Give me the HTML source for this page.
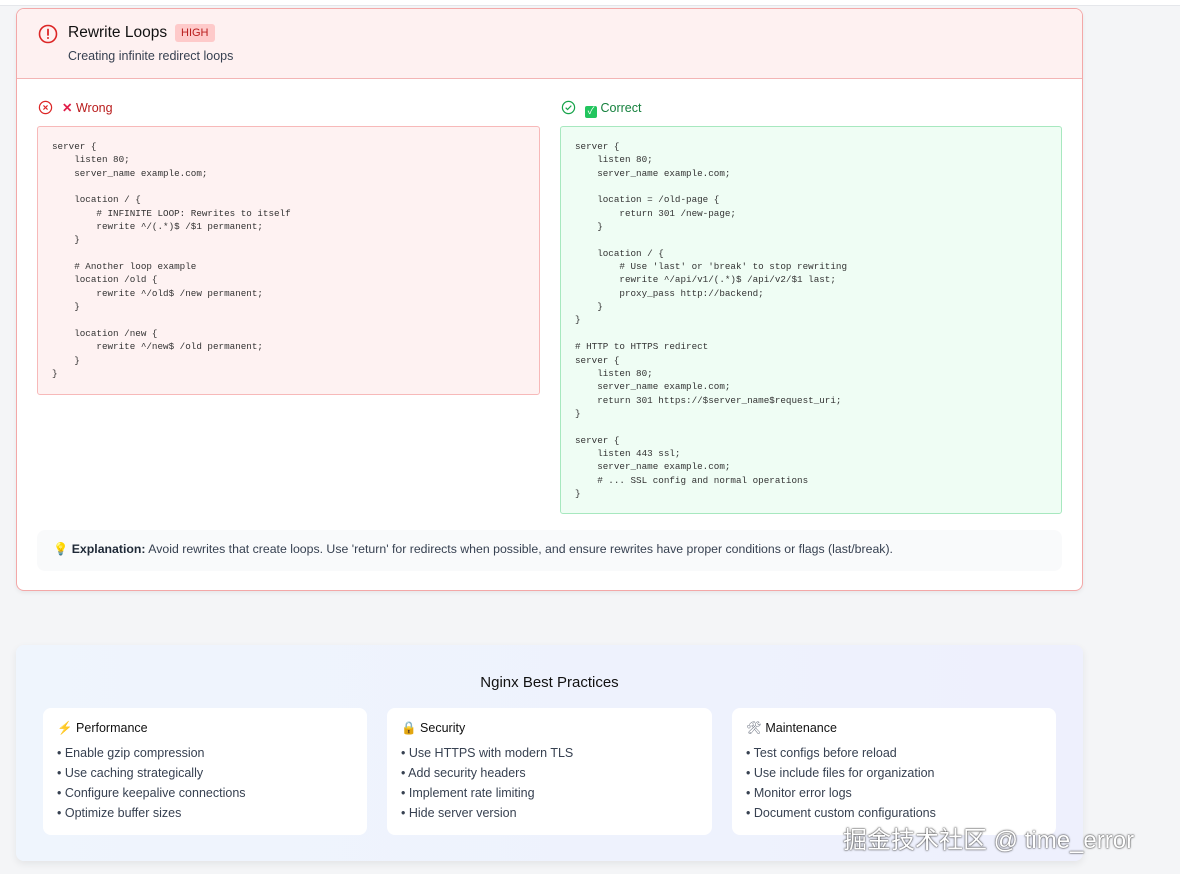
<!DOCTYPE html>
<html><head><meta charset="utf-8"><style>
*{box-sizing:border-box;margin:0;padding:0}
body{width:1180px;height:874px;background:#f4f5f7;font-family:"Liberation Sans","Noto Sans CJK SC",sans-serif;position:relative;overflow:hidden;color:#1f2937}
.top{position:absolute;left:0;top:0;width:1180px;height:6px;background:#fff;border-bottom:1px solid #e5e7eb}
.card{position:absolute;left:16px;top:8px;width:1067px;height:583px;background:#fff;border:1px solid #f3a8a8;border-radius:8px;overflow:hidden;box-shadow:0 2px 4px rgba(0,0,0,.06)}
.hd{height:70px;background:#fef1f1;border-bottom:1px solid #f3b5b5;position:relative}
.abs{position:absolute}
pre{font-family:"Liberation Mono",monospace;font-size:9.25px;line-height:13.35px;color:#333;white-space:pre}
.code{position:absolute;border-radius:3px;padding:13px 14px}
.bp{position:absolute;left:16px;top:645px;width:1067px;height:216px;border-radius:8px;background:linear-gradient(90deg,#eff5fd,#eef0fd);box-shadow:0 3px 8px rgba(0,0,0,.07)}
.c{position:absolute;top:63px;height:127px;background:#fff;border-radius:8px;padding:13px 0 0 14px;font-size:12.5px;color:#374151}
.c h4{font-weight:normal;font-size:12.5px;color:#111;margin-bottom:7px}
.c div{line-height:20px}
</style></head><body>
<div class="top"></div>
<div class="card">
 <div class="hd">
  <svg class="abs" style="left:21px;top:15px" width="20" height="20" viewBox="0 0 20 20"><circle cx="10" cy="10" r="8.5" fill="none" stroke="#dc2626" stroke-width="1.6"/><path d="M10 5.5v5.5" stroke="#dc2626" stroke-width="1.8" stroke-linecap="round"/><circle cx="10" cy="14" r="1" fill="#dc2626"/></svg>
  <div class="abs" style="left:51px;top:15px;font-size:15.5px;color:#111">Rewrite Loops</div>
  <div class="abs" style="left:158px;top:15px;background:#fecaca;color:#b91c1c;font-size:11px;padding:3px 6px;border-radius:3px">HIGH</div>
  <div class="abs" style="left:51px;top:40px;font-size:12.5px;color:#374151">Creating infinite redirect loops</div>
 </div>
 <svg class="abs" style="left:21px;top:91px" width="15" height="15" viewBox="0 0 16 16"><circle cx="8" cy="8" r="6.5" fill="none" stroke="#dc2626" stroke-width="1.3"/><path d="M5.8 5.8l4.4 4.4M10.2 5.8l-4.4 4.4" stroke="#dc2626" stroke-width="1.2"/></svg>
 <div class="abs" style="left:45px;top:91px;font-size:12.5px;color:#b91c1c"><span style="color:#e11d48;font-weight:bold">✕</span> Wrong</div>
 <svg class="abs" style="left:544px;top:91px" width="15" height="15" viewBox="0 0 16 16"><circle cx="8" cy="8" r="6.5" fill="none" stroke="#16a34a" stroke-width="1.3"/><path d="M5 8.2l2 2 4-4.2" fill="none" stroke="#16a34a" stroke-width="1.3"/></svg>
 <div class="abs" style="left:568px;top:92px;font-size:12.5px;color:#15803d;line-height:14px"><span style="display:inline-block;width:12px;height:12px;background:#22c55e;border-radius:2px;color:#fff;font-size:10px;text-align:center;line-height:12px;vertical-align:-2px">✓</span> Correct</div>
 <div class="code" style="left:20px;top:117px;width:503px;height:269px;background:#fef2f2;border:1px solid #f7b9b9"><pre>server {
    listen 80;
    server_name example.com;

    location / {
        # INFINITE LOOP: Rewrites to itself
        rewrite ^/(.*)$ /$1 permanent;
    }

    # Another loop example
    location /old {
        rewrite ^/old$ /new permanent;
    }

    location /new {
        rewrite ^/new$ /old permanent;
    }
}</pre></div>
 <div class="code" style="left:543px;top:117px;width:502px;height:388px;background:#effdf4;border:1px solid #a7e8bf"><pre>server {
    listen 80;
    server_name example.com;

    location = /old-page {
        return 301 /new-page;
    }

    location / {
        # Use 'last' or 'break' to stop rewriting
        rewrite ^/api/v1/(.*)$ /api/v2/$1 last;
        proxy_pass http://backend;
    }
}

# HTTP to HTTPS redirect
server {
    listen 80;
    server_name example.com;
    return 301 https://$server_name$request_uri;
}

server {
    listen 443 ssl;
    server_name example.com;
    # ... SSL config and normal operations
}</pre></div>
 <div class="abs" style="left:20px;top:521px;width:1025px;height:41px;background:#f9fafb;border-radius:8px;padding:12px 0 0 16px;font-size:12.3px;color:#374151"><span style="color:#eab308">💡</span> <b style="color:#1f2937">Explanation:</b> Avoid rewrites that create loops. Use 'return' for redirects when possible, and ensure rewrites have proper conditions or flags (last/break).</div>
</div>
<div class="bp">
 <div class="abs" style="left:0;width:1067px;top:29px;text-align:center;font-size:15px;color:#111">Nginx Best Practices</div>
 <div class="c" style="left:27px;width:324px"><h4><span style="color:#f97316">⚡</span> Performance</h4><div>• Enable gzip compression</div><div>• Use caching strategically</div><div>• Configure keepalive connections</div><div>• Optimize buffer sizes</div></div>
 <div class="c" style="left:371px;width:325px"><h4><span style="color:#f59e0b">🔒</span> Security</h4><div>• Use HTTPS with modern TLS</div><div>• Add security headers</div><div>• Implement rate limiting</div><div>• Hide server version</div></div>
 <div class="c" style="left:716px;width:324px"><h4><span style="color:#6b7280">🛠</span> Maintenance</h4><div>• Test configs before reload</div><div>• Use include files for organization</div><div>• Monitor error logs</div><div>• Document custom configurations</div></div>
</div>
<div class="abs" style="left:843px;top:820px;font-size:24px;color:#fff;text-shadow:0 0 2px #444,0 0 1px #222;white-space:nowrap">掘金技术社区 @ time_error</div>
</body></html>
